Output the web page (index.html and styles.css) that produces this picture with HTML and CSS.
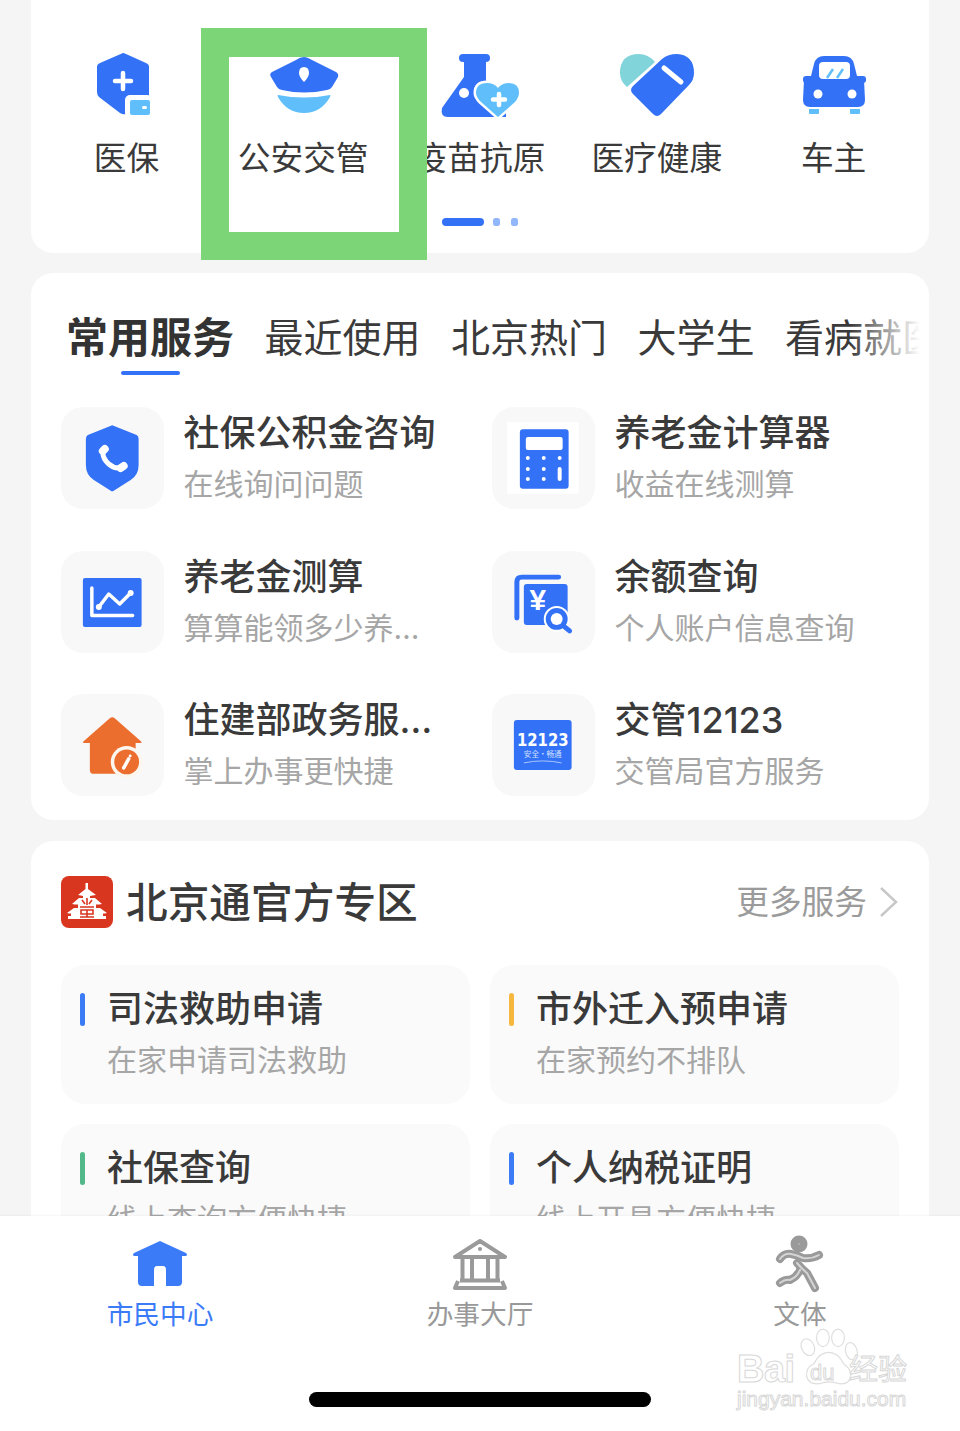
FILE: index.html
```html
<!DOCTYPE html>
<html lang="zh-CN">
<head>
<meta charset="utf-8">
<title>北京通</title>
<link rel="stylesheet" href="styles.css">
</head>
<body>
<div class="page">
  <main class="scroll">
    <section class="card quick">
      <div class="quick-grid">
        <div class="quick-item">
          <svg class="quick-icon" viewBox="0 0 80 66"><path class="blue" d="M37 1Q38 1 40 2L60 11Q63 12 63 15V46H46Q40 46 40 52V62Q37 63 34 61L13 45Q11 43 11 40V15Q11 12 14 11Z"/><rect class="white" x="39" y="43" width="27" height="23" rx="5"/><rect class="sky" x="44" y="48" width="20" height="15" rx="2"/><rect class="white" x="56" y="54" width="5" height="3" rx="1.5"/><path class="line-white w4" d="M37 21V37M29 29H45"/></svg>
          <span class="quick-label">医保</span>
        </div>
        <div class="quick-item">
          <svg class="quick-icon" viewBox="0 0 80 66"><path class="blue" d="M41 5Q44 5 49 8L73 20Q76 22 75 25L69 35Q67 38 64 38Q41 43 19 38Q16 38 14 35L8 25Q6 22 9 20L33 8Q37 5 41 5Z"/><path class="white" d="M41 15Q46 15 46 21Q46 25 41 30Q36 25 36 21Q36 15 41 15Z"/><path class="sky" d="M15 43Q41 48 67 43Q68 43 67 45Q58 61 41 61Q24 61 15 45Q14 43 15 43Z"/></svg>
          <span class="quick-label">公安交管</span>
        </div>
        <div class="quick-item">
          <svg class="quick-icon" viewBox="0 0 80 66"><rect class="blue" x="19" y="2" width="31" height="8" rx="4"/><path class="blue" d="M24 8H46V30L66 60V65H8Q0 65 2 56L24 25Z"/><circle class="white" cx="24" cy="41" r="5"/><path class="sky halo" d="M58 65L41 50Q36 45 36 41Q36 31 47 31Q54 31 58 36Q62 31 69 31Q79 31 79 41Q79 45 75 50Z"/><path class="line-white w4" d="M59 42V53M53 47.500H65"/></svg>
          <span class="quick-label">疫苗抗原</span>
        </div>
        <div class="quick-item">
          <svg class="quick-icon" viewBox="0 0 80 66"><path class="teal" d="M38 10Q31 2 22 2Q3 2 3 21Q3 29 10 35Z"/><path class="blue" d="M16 34L45 7Q51 2 60 2Q77 3 77 21Q77 28 72 33L44 62Q40 66 36 62L16 42Q12 38 16 34Z"/><path class="line-white w5" d="M47 16L64 30"/></svg>
          <span class="quick-label">医疗健康</span>
        </div>
        <div class="quick-item">
          <svg class="quick-icon" viewBox="0 0 80 66"><path class="blue" d="M16 28L20 12Q22 4 30 4H50Q58 4 60 12L64 28Z"/><path class="blue" d="M10 28H70L71 48Q71 55 64 55H16Q9 55 9 48Z"/><rect class="blue" x="9" y="24" width="63" height="7" rx="3"/><rect class="white" x="25" y="10" width="31" height="17" rx="4"/><path class="line-sky" d="M33 26L39 17M43 26L49 17"/><circle class="white" cx="24" cy="42" r="4.5"/><circle class="white" cx="58" cy="42" r="4.5"/><path class="sky" d="M15 57H25V61Q25 62 24 62H16Q15 62 15 61ZM56 57H66V61Q66 62 65 62H57Q56 62 56 61Z"/></svg>
          <span class="quick-label">车主</span>
        </div>
      </div>
      <div class="pager"><i class="pager-bar"></i><i class="pager-dot"></i><i class="pager-dot"></i></div>
    </section>

    <section class="card services">
      <div class="tabs">
        <span class="tab active">常用服务</span>
        <span class="tab">最近使用</span>
        <span class="tab">北京热门</span>
        <span class="tab">大学生</span>
        <span class="tab">看病就医</span>
      </div>
      <div class="service-grid">
        <div class="service">
          <svg class="service-icon" viewBox="0 0 103 102"><path class="blue" d="M51.5 18L76 28Q78 29 78 32V58Q78 68 70 73L53 84Q51.5 85 50 84L33 73Q25 68 25 58V32Q25 29 27 28Z"/><path class="line-white w5" d="M42 45Q42 52 48 57Q55 63 62 60"/><path class="line-white w7" d="M42 44L44 42M60 61L63 59"/></svg>
          <div class="service-text"><div class="service-title">社保公积金咨询</div><div class="service-sub">在线询问问题</div></div>
        </div>
        <div class="service">
          <svg class="service-icon" viewBox="0 0 103 102"><rect class="white" x="15" y="15" width="72" height="72"/><rect class="blue" x="28" y="22" width="49" height="60" rx="3"/><rect class="white" x="34" y="30" width="37" height="13" rx="2"/><g class="white"><circle cx="36" cy="51" r="2"/><circle cx="52" cy="51" r="2"/><circle cx="68" cy="51" r="2"/><circle cx="36" cy="62" r="2"/><circle cx="52" cy="62" r="2"/><circle cx="36" cy="72" r="2"/><circle cx="52" cy="72" r="2"/><rect x="66" y="60" width="4" height="14" rx="2"/></g></svg>
          <div class="service-text"><div class="service-title">养老金计算器</div><div class="service-sub">收益在线测算</div></div>
        </div>
        <div class="service">
          <svg class="service-icon" viewBox="0 0 103 102"><rect class="blue" x="22" y="27" width="59" height="49" rx="2"/><path class="line-white w3" d="M31 37V64.500H72"/><path class="line-white w3" d="M38 56L48 43L59 53L70 42"/><circle class="white" cx="38" cy="56" r="3"/><circle class="white" cx="70" cy="42" r="3"/></svg>
          <div class="service-text"><div class="service-title">养老金测算</div><div class="service-sub">算算能领多少养…</div></div>
        </div>
        <div class="service">
          <svg class="service-icon" viewBox="0 0 103 102"><path class="line-blue" d="M67 26H30Q25 26 25 31V67"/><rect class="blue" x="32" y="33" width="44" height="41" rx="3"/><text class="yen" x="46" y="59" text-anchor="middle">¥</text><circle class="blue halo-thick" cx="65" cy="68" r="11"/><circle class="white" cx="65" cy="68" r="6"/><path class="line-blue" d="M73 76L78 80"/></svg>
          <div class="service-text"><div class="service-title">余额查询</div><div class="service-sub">个人账户信息查询</div></div>
        </div>
        <div class="service">
          <svg class="service-icon" viewBox="0 0 103 102"><path class="orange" d="M49 24Q51.500 22 54 24L80 47Q82 49 80 49H75V76Q75 80 71 80H33Q29 80 29 76V49H23Q21 49 23 47Z"/><circle class="cream" cx="66" cy="68" r="16"/><circle class="orange" cx="66" cy="68" r="12.500"/><path class="line-white w3" d="M63 74L68 65"/><circle class="white" cx="69.500" cy="62" r="1.500"/></svg>
          <div class="service-text"><div class="service-title">住建部政务服…</div><div class="service-sub">掌上办事更快捷</div></div>
        </div>
        <div class="service">
          <svg class="service-icon" viewBox="0 0 103 102"><rect class="blue" x="22" y="26" width="58" height="50" rx="3"/><text class="code" x="51" y="52" text-anchor="middle" textLength="52" lengthAdjust="spacingAndGlyphs">12123</text><text class="code-sub" x="51" y="63" text-anchor="middle" textLength="38" lengthAdjust="spacingAndGlyphs">安全·畅通</text><path class="arc" d="M32 69Q51 65 70 69"/></svg>
          <div class="service-text"><div class="service-title">交管12123</div><div class="service-sub">交管局官方服务</div></div>
        </div>
      </div>
    </section>

    <section class="card zone">
      <header class="zone-head">
        <svg class="zone-logo" viewBox="0 0 52 52"><rect class="red" width="52" height="52" rx="8"/><path class="white" d="M24.500 7H27V13L35 19Q31 19.500 29 20V22H34L41 28Q38 28.500 35 28.500V32H39L46 37Q44 37.500 42 37.500V40H45V43H7V40H10V37.500Q8 37.500 6 37L13 32H17V28.500Q14 28.500 11 28L18 22H22V20Q20 19.500 17 19L24.500 13Z"/><path class="line-red" d="M26 22V29M21 24L24 28M31 24L28 28M19 31H33M20 34H32V38H20ZM26 34V41M19 41H33"/></svg>
        <h2 class="zone-title">北京通官方专区</h2>
        <span class="zone-more">更多服务</span>
        <svg class="chevron" viewBox="0 0 20 32"><path d="M2 2L17 16L2 30"/></svg>
      </header>
      <div class="zone-grid">
        <div class="zone-card"><i class="mark mark-blue"></i><div><div class="zone-card-title">司法救助申请</div><div class="zone-card-sub">在家申请司法救助</div></div></div>
        <div class="zone-card"><i class="mark mark-yellow"></i><div><div class="zone-card-title">市外迁入预申请</div><div class="zone-card-sub">在家预约不排队</div></div></div>
        <div class="zone-card"><i class="mark mark-green"></i><div><div class="zone-card-title">社保查询</div><div class="zone-card-sub">线上查询方便快捷</div></div></div>
        <div class="zone-card"><i class="mark mark-blue"></i><div><div class="zone-card-title">个人纳税证明</div><div class="zone-card-sub">线上开具方便快捷</div></div></div>
      </div>
    </section>
  </main>

  <nav class="tabbar">
    <div class="nav-row">
      <div class="nav-item current">
        <svg class="nav-icon" viewBox="0 0 60 52"><path class="nav-home" d="M30 3L56 15Q58 17 56 18H52V44Q52 48 48 48H36V32Q36 28 33 28H27Q24 28 24 32V48H12Q8 48 8 44V18H4Q2 17 4 15Z"/></svg>
        <span>市民中心</span>
      </div>
      <div class="nav-item">
        <svg class="nav-icon" viewBox="0 0 60 52"><path class="nav-line" d="M30 3L55 19H5ZM12.500 21V41M22 21V41M38 21V41M47.500 21V41M10 42.500H50M8 43L5 50H55L52 43"/><circle class="nav-dot" cx="30" cy="11" r="2"/></svg>
        <span>办事大厅</span>
      </div>
      <div class="nav-item">
        <svg class="nav-icon" viewBox="0 0 60 52"><g class="run-outer"><circle cx="29" cy="6" r="4.500"/><path d="M10 21Q14 15 21 16Q27 17 33 20Q42 21 49 17"/><path d="M27 25Q32 31 37 35L45 50"/><path d="M10 45Q15 41 20 42Q27 39 30 32"/></g><g class="run-inner"><path d="M10 21Q14 15 21 16Q27 17 33 20Q42 21 49 17"/><path d="M27 25Q32 31 37 35L45 50"/><path d="M10 45Q15 41 20 42Q27 39 30 32"/></g></svg>
        <span>文体</span>
      </div>
    </div>
    <div class="home-indicator"></div>
  </nav>

  <div class="watermark">
    <svg class="paw" viewBox="0 0 110 100"><g><ellipse cx="22" cy="33" rx="11" ry="15" transform="rotate(-25 22 33)"/><ellipse cx="48" cy="17" rx="11" ry="15"/><ellipse cx="74" cy="17" rx="11" ry="15"/><ellipse cx="97" cy="40" rx="10" ry="15" transform="rotate(-15 97 40)"/><path d="M58 42Q42 42 32 62Q18 68 20 84Q24 98 42 96Q58 90 76 96Q94 98 96 82Q96 70 84 62Q74 42 58 42Z"/></g></svg>
    <span class="wm-bai">Bai</span>
    <span class="wm-du">du</span>
    <span class="wm-cn">经验</span>
    <span class="wm-url">jingyan.baidu.com</span>
  </div>

  <div class="marker"></div>
</div>
</body>
</html>
```
FILE: styles.css
```css
* { box-sizing: border-box; margin: 0; padding: 0; }
html, body { height: 100%; background: #f5f5f5; }
body { font-family: "Inter", "Noto Sans CJK SC", sans-serif; color: #333; overflow: hidden; }
i { display: block; font-style: normal; }

.page { position: relative; width: 960px; height: 1431px; display: flex; flex-direction: column; overflow: hidden; }
.scroll { flex: 1; min-height: 0; overflow: hidden; padding: 0 31px; display: flex; flex-direction: column; gap: 20px; }
.card { background: #fff; border-radius: 22px; flex: none; }

/* svg paints */
.blue { fill: #3371f6; }
.sky { fill: #60bffb; }
.teal { fill: #80d4da; }
.white { fill: #fff; }
.orange { fill: #ec6e2f; }
.cream { fill: #fbf7ef; }
.red { fill: #d9361f; }
.halo { stroke: #fff; stroke-width: 5; paint-order: stroke; }
.halo-thick { stroke: #fff; stroke-width: 4; paint-order: stroke; }
.line-white { fill: none; stroke: #fff; stroke-linecap: round; stroke-linejoin: round; }
.w3 { stroke-width: 3.5; }
.w4 { stroke-width: 4.5; }
.w5 { stroke-width: 5; }
.w7 { stroke-width: 8; }
.line-sky { fill: none; stroke: #60bffb; stroke-width: 2.5; }
.line-blue { fill: none; stroke: #3371f6; stroke-width: 5; stroke-linecap: round; }
.line-red { fill: none; stroke: #d9361f; stroke-width: 1.6; }
.yen { fill: #fff; font: 700 30px "Liberation Sans", sans-serif; }
.code { fill: #fff; font: 700 18px "DejaVu Sans", sans-serif; }
.code-sub { fill: #cfe0ff; font: 400 8px "Noto Sans CJK SC", sans-serif; }
.arc { fill: none; stroke: #a9c6fb; stroke-width: 1; }

/* quick entries */
.quick { height: 253px; border-radius: 0 0 22px 22px; padding: 52px 7px 0; }
.quick-grid { display: grid; grid-template-columns: repeat(5, 1fr); }
.quick-item { display: flex; flex-direction: column; align-items: center; }
.quick-icon { width: 80px; height: 66px; overflow: visible; }
.quick-label { margin-top: 18px; font-size: 32.700px; line-height: 44px; white-space: nowrap; color: #3a3a3a; }
.pager { display: flex; justify-content: center; align-items: center; gap: 9px; margin-top: 38px; }
.pager-bar { width: 42px; height: 8px; border-radius: 4px; background: #3371f6; }
.pager-dot { width: 7px; height: 8px; border-radius: 2.5px; background: #92b6fb; }
.pager-dot:last-child { margin-left: 2px; }

/* services */
.services { position: relative; height: 547px; padding: 40px 0 0; }
.services::before { content: ""; position: absolute; left: 90px; top: 98px; width: 59px; height: 4px; border-radius: 2px; background: #3371f6; }
.tabs { position: relative; display: flex; gap: 30.500px; height: 50px; margin: 0 9px 44px 35px; overflow: hidden; white-space: nowrap; font-size: 39px; line-height: 50px; color: #3a3a3a; }
.tabs::after { content: ""; position: absolute; top: 0; right: 0; bottom: 0; width: 70px; background: linear-gradient(to right, rgba(255,255,255,0), #fff); }
.tab { flex: none; }
.tab.active { font-size: 42px; font-weight: 700; color: #333; }

.service-grid { display: grid; grid-template-columns: 431px 1fr; grid-auto-rows: 102px; row-gap: 41.500px; padding-left: 30px; }
.service { display: flex; gap: 20px; min-width: 0; }
.service-icon { flex: none; width: 102.500px; height: 102px; background: #f8f8f8; border-radius: 22px; }
.service-text { padding-top: 1px; }
.service-title { font-size: 36px; line-height: 50px; font-weight: 500; color: #3a3a3a; white-space: nowrap; }
.service-sub { font-size: 30px; line-height: 52px; color: #a6a6a6; white-space: nowrap; }

/* zone */
.zone { margin-top: 1px; padding: 35px 30px 0; }
.zone-head { display: flex; align-items: center; height: 52px; margin-bottom: 37px; }
.zone-logo { width: 52px; height: 52px; flex: none; }
.zone-title { margin: 2px 0 0 13px; flex: 1; font-size: 41.700px; line-height: 52px; font-weight: 500; color: #3a3a3a; }
.zone-more { margin-bottom: 5px; font-size: 32.700px; color: #9b9b9b; }
.chevron { width: 20px; height: 32px; margin-left: 12px; fill: none; stroke: #c8c8c8; stroke-width: 2.500; }
.zone-grid { display: grid; grid-template-columns: 409px 409px; gap: 20px; }
.zone-card { display: flex; height: 139px; padding: 19px 0 0 19px; border-radius: 24px; background: #fafafa; }
.mark { flex: none; width: 5px; height: 33px; margin: 9px 22px 0 0; border-radius: 2.500px; }
.mark-blue { background: #3b7bf6; }
.mark-yellow { background: #f6b73e; }
.mark-green { background: #54b98a; }
.zone-card-title { font-size: 36px; line-height: 50px; font-weight: 500; color: #3a3a3a; white-space: nowrap; }
.zone-card-sub { font-size: 30px; line-height: 52px; color: #a6a6a6; white-space: nowrap; }

/* tab bar */
.tabbar { position: relative; flex: none; height: 215px; background: #fff; box-shadow: 0 -1px 2px rgba(0,0,0,.04); }
.nav-row { display: grid; grid-template-columns: repeat(3, 1fr); padding-top: 22px; }
.nav-item { display: flex; flex-direction: column; align-items: center; height: 100px; font-size: 26.700px; line-height: 40px; color: #999; }
.nav-item.current { color: #3b7bf8; }
.nav-icon { width: 60px; height: 52px; margin-bottom: 4px; overflow: visible; }
.nav-home { fill: #3b7bf8; }
.nav-line { fill: none; stroke: #9a9a9a; stroke-width: 4; stroke-linejoin: round; }
.nav-dot { fill: #9a9a9a; }
.run-outer { fill: none; stroke: #9a9a9a; stroke-width: 8; stroke-linecap: round; stroke-linejoin: round; }
.run-inner { fill: none; stroke: #d4d4d4; stroke-width: 2; stroke-linecap: round; stroke-linejoin: round; }
.home-indicator { position: absolute; left: 309px; top: 176px; width: 342px; height: 15px; border-radius: 8px; background: #000; }

/* green annotation frame */
.marker { position: absolute; left: 201px; top: 28px; width: 226px; height: 232px; border: solid #7cd577; border-width: 29px 28px 28px; }

/* watermark */
.watermark { position: absolute; left: 737px; top: 1328px; width: 172px; height: 84px; font-family: "Liberation Sans", sans-serif; color: #fff; -webkit-text-stroke: 1px #d8d8d8; }
.paw { position: absolute; left: 58px; top: 0; width: 64px; height: 58px; fill: #fff; stroke: #dedede; stroke-width: 2; }
.watermark span { position: absolute; white-space: nowrap; }
.wm-bai { left: 0; top: 18px; font-size: 38px; line-height: 46px; font-weight: 700; letter-spacing: -.5px; }
.wm-du { left: 73px; top: 32px; font-size: 22px; line-height: 26px; }
.wm-cn { left: 112px; top: 20px; font-family: "Noto Sans CJK SC", sans-serif; font-size: 29px; line-height: 38px; }
.wm-url { left: 0; top: 59px; font-size: 21px; line-height: 24px; }
```
